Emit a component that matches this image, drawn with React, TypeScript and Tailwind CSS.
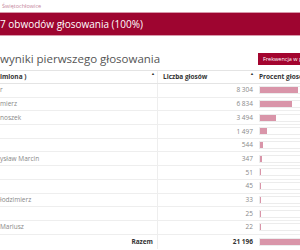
import React from "react";

const rows = [
  { name: "r", votes: 8304 },
  { name: "mierz", votes: 6834 },
  { name: "noszek", votes: 3494 },
  { name: "", votes: 1497 },
  { name: "", votes: 544 },
  { name: "ysław Marcin", votes: 347 },
  { name: "", votes: 51 },
  { name: "", votes: 45 },
  { name: "łodzimierz", votes: 33 },
  { name: "", votes: 25 },
  { name: "Mariusz", votes: 22 },
];
const total = 21196;
const fmt = (n: number) => String(n).replace(/\B(?=(\d{3})+(?!\d))/g, "\u00a0");

function SortMark() {
  return <span className="absolute right-[2px] top-[1px] text-[4px] leading-none text-[#333]">▲</span>;
}

function Bar({ v }: { v: number }) {
  const w = (v / total) * 100;
  return (
    <div className="w-[100px] h-[8px] border border-[#ececec] bg-white">
      <div className="h-full bg-[#d995a9]" style={{ width: `${w}%` }} />
    </div>
  );
}

export default function App() {
  return (
    <div
      className="w-[300px] h-[250px] overflow-hidden bg-white"
      style={{ fontFamily: '"Open Sans", "Noto Sans", sans-serif' }}
    >
      <div className="h-[12px] pl-[2px] text-[5.5px] leading-[12px] text-[#c4849a]">Świętochłowice</div>
      <div className="h-[24px] bg-[#9e0530] border-y border-[#d899ab] flex items-center text-white text-[10px] whitespace-nowrap">
        7 obwodów głosowania (100%)
      </div>
      <div className="flex items-center justify-between h-[17px] mt-[14px] mb-[3px]">
        <div className="text-[11.5px] text-[#555] whitespace-nowrap">wyniki pierwszego głosowania</div>
        <div className="h-[12px] w-[42px] shrink-0 bg-[#a3052f] text-white text-[5.5px] leading-[12px] pl-[5px] whitespace-nowrap overflow-hidden">
          Frekwencja w pierwszym
        </div>
      </div>
      <div className="w-[400px] text-[6.5px] text-[#888]">
        <div className="flex h-[14px] items-center border-y border-[#e4e4e4] font-bold text-[#333]">
          <div className="relative w-[157px] h-full flex items-center">
            imiona )<SortMark />
          </div>
          <div className="relative w-[99px] h-full flex items-center pl-[5px] border-l border-[#eee]">
            Liczba głosów<SortMark />
          </div>
          <div className="h-full flex items-center pl-[3px]">Procent głosów</div>
        </div>
        {rows.map((r, i) => (
          <div key={i} className="flex h-[13.7px] items-center border-b border-[#eee]">
            <div className="w-[157px] h-full flex items-center whitespace-nowrap">{r.name}</div>
            <div className="w-[99px] h-full flex items-center justify-end pr-[3px] border-l border-[#eee]">
              {fmt(r.votes)}
            </div>
            <div className="h-full flex items-center pl-[3px]">
              <Bar v={r.votes} />
            </div>
          </div>
        ))}
        <div className="flex h-[14px] items-center font-bold text-[#333]">
          <div className="w-[157px] h-full flex items-center justify-end pr-[4px]">Razem</div>
          <div className="w-[99px] h-full flex items-center justify-end pr-[3px] border-l border-[#eee]">
            {fmt(total)}
          </div>
          <div className="h-full flex items-center pl-[3px]">
            <Bar v={total} />
          </div>
        </div>
      </div>
    </div>
  );
}
